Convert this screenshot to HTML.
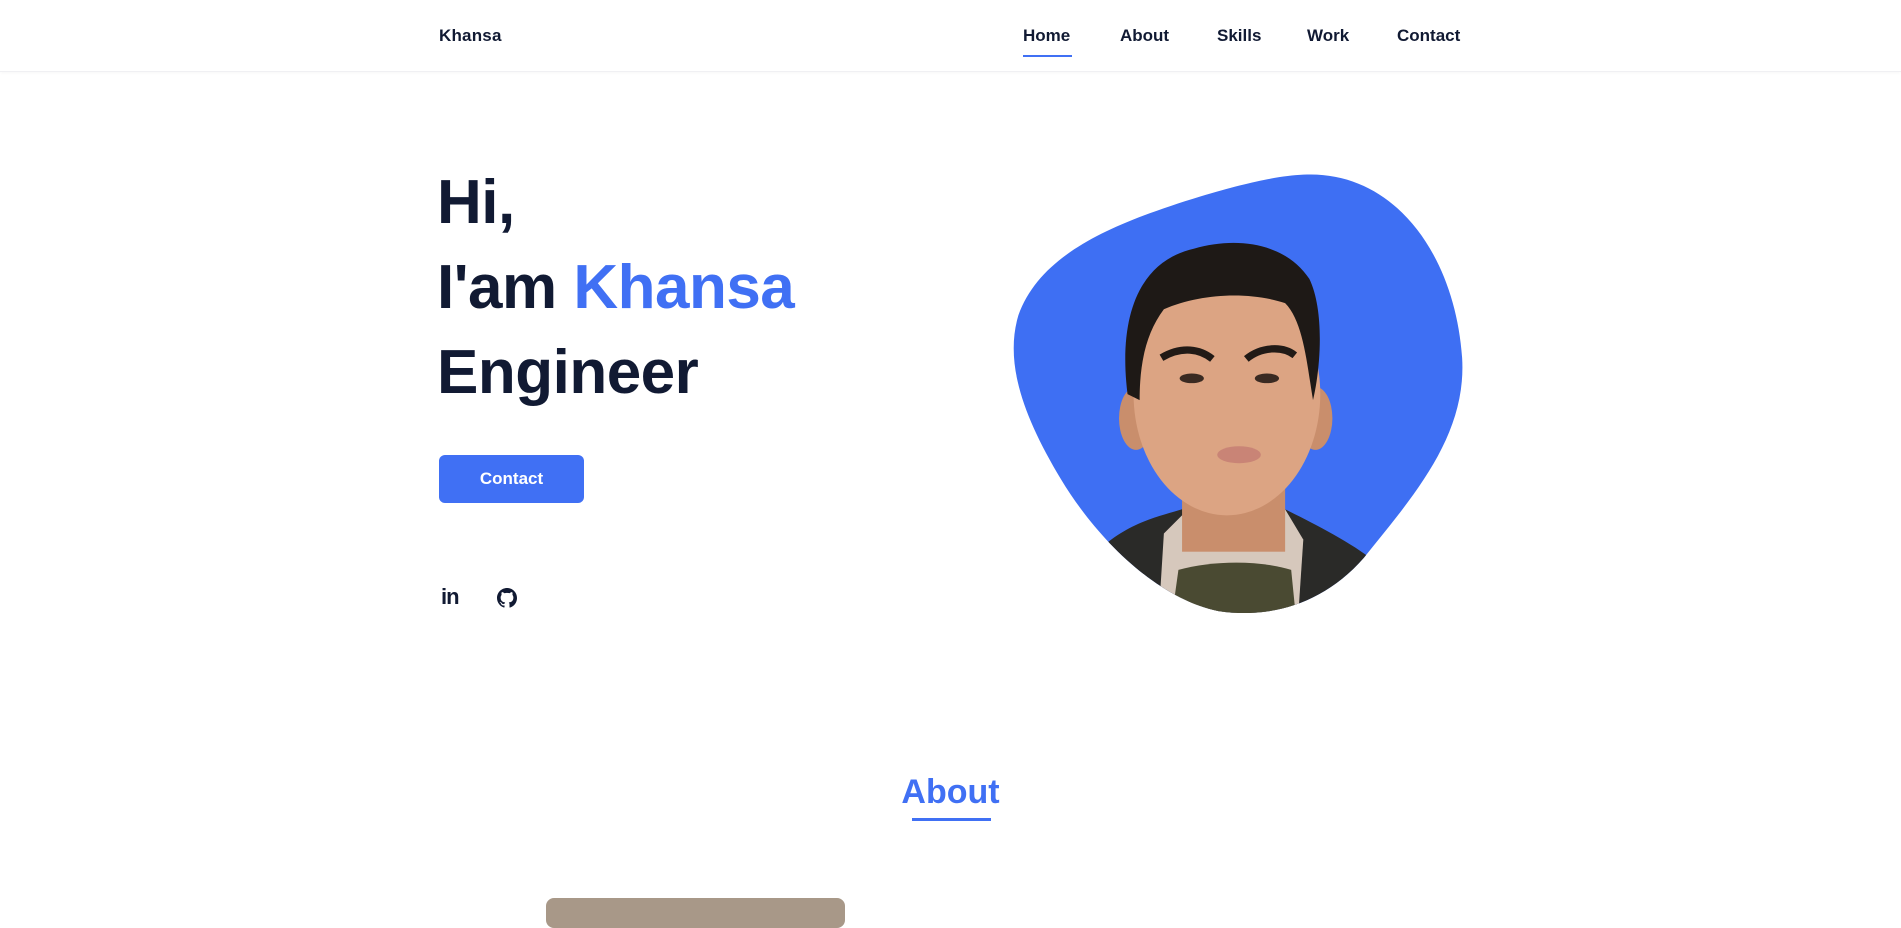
<!DOCTYPE html>
<html><head><meta charset="utf-8"><style>
*{margin:0;padding:0;box-sizing:border-box}
body{width:1901px;height:907px;overflow:hidden;background:#fff;font-family:"Liberation Sans",sans-serif;color:#111a33;position:relative}
.nav{position:absolute;left:0;top:0;width:1901px;height:72px;border-bottom:1px solid #f0f0f3;box-shadow:0 1px 3px rgba(0,0,0,.03)}
.logo{position:absolute;left:439px;top:26px;font-size:17px;font-weight:bold;letter-spacing:.2px}
.nl{position:absolute;top:26px;font-size:17px;font-weight:bold}
.ul{position:absolute;left:1023px;top:55px;width:49px;height:2px;background:#4070f4}
.h{position:absolute;left:437px;font-size:62px;font-weight:bold;line-height:85px;letter-spacing:-.5px}
.btn{position:absolute;left:439px;top:455px;width:145px;height:48px;background:#4070f4;border-radius:6px;color:#fff;font-weight:bold;font-size:17px;text-align:center;line-height:48px}
.about{position:absolute;left:0;width:1901px;top:773px;text-align:center;color:#4070f4;font-size:34px;font-weight:bold}
.aul{position:absolute;left:912px;top:818px;width:79px;height:3px;background:#4070f4}
.img{position:absolute;left:546px;top:898px;width:299px;height:30px;background:#a89888;border-radius:8px}
</style></head><body>
<div class="nav">
<div class="logo">Khansa</div>
<div class="nl" style="left:1023px">Home</div>
<div class="nl" style="left:1120px">About</div>
<div class="nl" style="left:1217px">Skills</div>
<div class="nl" style="left:1307px">Work</div>
<div class="nl" style="left:1397px">Contact</div>
<div class="ul"></div>
</div>
<div class="h" style="top:160px">Hi,</div>
<div class="h" style="top:245px">I'am <span style="color:#4070f4">Khansa</span></div>
<div class="h" style="top:330px">Engineer</div>
<div class="btn">Contact</div>
<div style="position:absolute;left:441px;top:584px;font-size:22px;font-weight:bold;letter-spacing:-1px">in</div>
<svg style="position:absolute;left:497px;top:588px" width="20" height="20" viewBox="0 0 16 16"><path fill="#111a33" d="M8 0C3.580 0 0 3.58 0 8c0 3.54 2.29 6.53 5.47 7.590.4.07.55-.17.55-.38v-1.33c-2.23.48-2.7-1.070-2.7-1.07-.36-.92-.89-1.17-.89-1.17-.73-.5.06-.49.06-.49.8.06 1.23.83 1.23.83.71 1.22 1.87.87 2.33.66.07-.52.28-.87.5-1.07-1.78-.2-3.64-.89-3.64-3.95 0-.87.31-1.59.82-2.15-.08-.2-.36-1.02.08-2.12 0 0 .67-.21 2.2.82a7.5 7.5 0 0 1 4 0c1.53-1.04 2.2-.82 2.2-.82.44 1.1.16 1.92.08 2.12.51.56.82 1.27.82 2.15 0 3.07-1.87 3.75-3.65 3.95.29.25.54.73.54 1.48v2.2c0 .21.15.46.55.38A8 8 0 0 0 16 8c0-4.42-3.58-8-8-8z"/></svg>
<svg style="position:absolute;left:0;top:0" width="1901" height="907" viewBox="0 0 1568 748">
<defs><clipPath id="c"><path d="M1075,144 C1150,140 1200,210 1206,295 C1210,360 1165,410 1125,460 C1090,500 1045,510 1005,504 C955,494 905,445 875,395 C845,345 828,300 840,260 C858,210 915,185 990,162 C1030,150 1055,145 1075,144 Z"/></clipPath></defs>
<g clip-path="url(#c)">
<rect x="800" y="130" width="420" height="400" fill="#3e6ff3"/>
<path d="M905,455 C930,430 960,425 975,420 L1060,420 C1080,430 1110,445 1130,460 L1130,520 L900,520Z" fill="#2a2a28"/>
<path d="M960,440 L980,420 L1060,420 L1075,445 L1070,520 L955,520Z" fill="#d6c8bc"/>
<path d="M972,470 C1000,462 1040,462 1065,470 L1070,520 L965,520Z" fill="#4a4a32"/>
<rect x="975" y="360" width="85" height="95" fill="#c98e6c"/>
<ellipse cx="937" cy="345" rx="14" ry="26" fill="#c98e6c"/>
<ellipse cx="1085" cy="345" rx="14" ry="26" fill="#c98e6c"/>
<ellipse cx="1012" cy="325" rx="77" ry="100" fill="#dca483"/>
<path d="M930,325 C922,260 940,215 985,205 C1020,195 1060,200 1080,230 C1092,255 1090,300 1083,330 C1078,300 1075,265 1060,250 C1030,240 990,242 960,255 C945,275 940,300 940,330Z" fill="#1e1916"/>
<path d="M958,295 C975,285 990,288 1000,296" stroke="#211a16" stroke-width="6" fill="none"/>
<path d="M1028,296 C1040,286 1058,285 1068,293" stroke="#211a16" stroke-width="6" fill="none"/>
<ellipse cx="983" cy="312" rx="10" ry="4" fill="#3a2a22"/>
<ellipse cx="1045" cy="312" rx="10" ry="4" fill="#3a2a22"/>
<ellipse cx="1022" cy="375" rx="18" ry="7" fill="#c98476"/>
</g>
</svg>
<div class="about">About</div>
<div class="aul"></div>
<div class="img"></div>
</body></html>
